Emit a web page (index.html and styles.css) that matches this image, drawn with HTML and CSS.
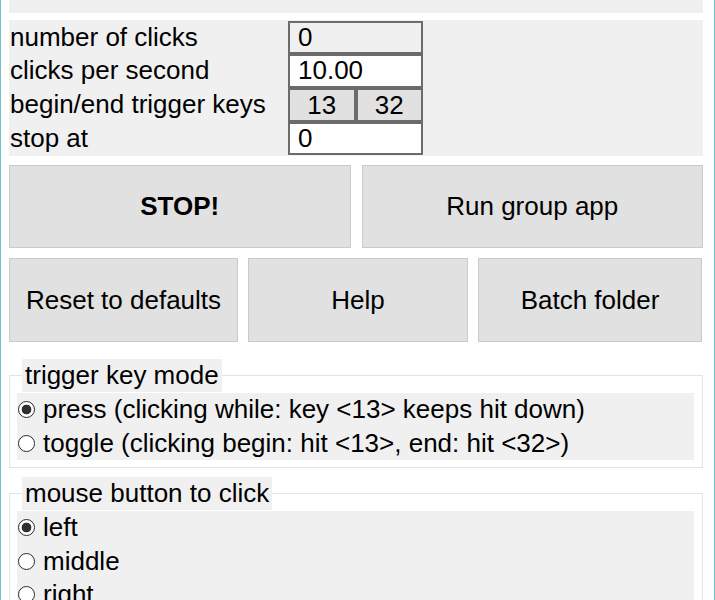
FILE: index.html
```html
<!DOCTYPE html>
<html>
<head>
<meta charset="utf-8">
<link rel="stylesheet" href="styles.css">
</head>
<body>
<div class="window">
  <div class="top-panel"></div>
  <div class="settings">
    <div class="label">number of clicks</div>
    <div class="field field-readonly">0</div>
    <div class="label">clicks per second</div>
    <div class="field">10.00</div>
    <div class="label">begin/end trigger keys</div>
    <div class="keys">
      <div class="key">13</div>
      <div class="key">32</div>
    </div>
    <div class="label">stop at</div>
    <div class="field">0</div>
  </div>
  <div class="btn-row two">
    <div class="btn btn-bold">STOP!</div>
    <div class="btn">Run group app</div>
  </div>
  <div class="btn-row three">
    <div class="btn">Reset to defaults</div>
    <div class="btn">Help</div>
    <div class="btn">Batch folder</div>
  </div>
  <fieldset class="group group-first">
    <legend class="group-title">trigger key mode</legend>
    <div class="options">
      <div class="option"><span class="radio checked"></span><span>press (clicking while: key &lt;13&gt; keeps hit down)</span></div>
      <div class="option"><span class="radio"></span><span>toggle (clicking begin: hit &lt;13&gt;, end: hit &lt;32&gt;)</span></div>
    </div>
  </fieldset>
  <fieldset class="group">
    <legend class="group-title">mouse button to click</legend>
    <div class="options">
      <div class="option"><span class="radio checked"></span><span>left</span></div>
      <div class="option"><span class="radio"></span><span>middle</span></div>
      <div class="option"><span class="radio"></span><span>right</span></div>
    </div>
  </fieldset>
</div>
</body>
</html>
```

FILE: styles.css
```css
html, body {
  margin: 0;
  padding: 0;
  background: #ffffff;
  height: 100%;
  overflow: hidden;
}

.window {
  box-sizing: border-box;
  height: 600px;
  width: 715px;
  border-left: 1px solid #6fc3cf;
  border-right: 1px solid #6fc3cf;
  padding: 0 11px 0 8px;
  font-family: "Liberation Sans", Arial, sans-serif;
  font-size: 26px;
  color: #000;
  overflow: hidden;
}

.top-panel {
  height: 13px;
  background: #f0f0f0;
}

.settings {
  margin-top: 7px;
  background: #f0f0f0;
  padding: 1px 0 1px 1px;
  display: grid;
  grid-template-columns: 278px 135px;
  grid-template-rows: 33px 34px 34px 33px;
}

.label {
  line-height: 33px;
  white-space: nowrap;
}

.field {
  box-sizing: border-box;
  border: 2px solid #6b6b6b;
  background: #ffffff;
  padding-left: 8px;
  line-height: 29px;
}

.field-readonly {
  background: #f0f0f0;
}

.keys {
  display: flex;
}

.key {
  box-sizing: border-box;
  flex: 1;
  border: 2px solid #6b6b6b;
  background: #e1e1e1;
  text-align: center;
  line-height: 30px;
}

.btn-row {
  display: grid;
  gap: 11px;
  margin-top: 9px;
}

.btn-row.two {
  grid-template-columns: 1fr 1fr;
  height: 83px;
}

.btn-row.three {
  grid-template-columns: 229px 220px 224px;
  gap: 10px;
  margin-top: 10px;
  height: 84px;
}

.btn {
  box-sizing: border-box;
  background: #e1e1e1;
  border: 1px solid #cacaca;
  display: flex;
  align-items: center;
  justify-content: center;
  white-space: nowrap;
}

.btn-bold {
  font-weight: bold;
}

.group {
  margin: 9px 0 0 0;
  border: 1px solid #e4e4e4;
  padding: 1px 8px 7px 7px;
  min-width: 0;
}

.group-first {
  margin-top: 17px;
}

.group-title {
  background: #f0f0f0;
  margin-left: 5px;
  padding: 0 3px;
  line-height: 33px;
}

.options {
  background: #f0f0f0;
}

.option {
  display: flex;
  align-items: center;
  height: 33.5px;
  padding-left: 1px;
  white-space: nowrap;
}

.radio {
  box-sizing: border-box;
  width: 17px;
  height: 17px;
  border: 1px solid #2a2a2a;
  border-radius: 50%;
  background: #ffffff;
  margin-right: 8px;
  flex: none;
}

.radio.checked {
  background: radial-gradient(circle, #303030 0, #303030 4.5px, #ffffff 5.2px);
}
```
